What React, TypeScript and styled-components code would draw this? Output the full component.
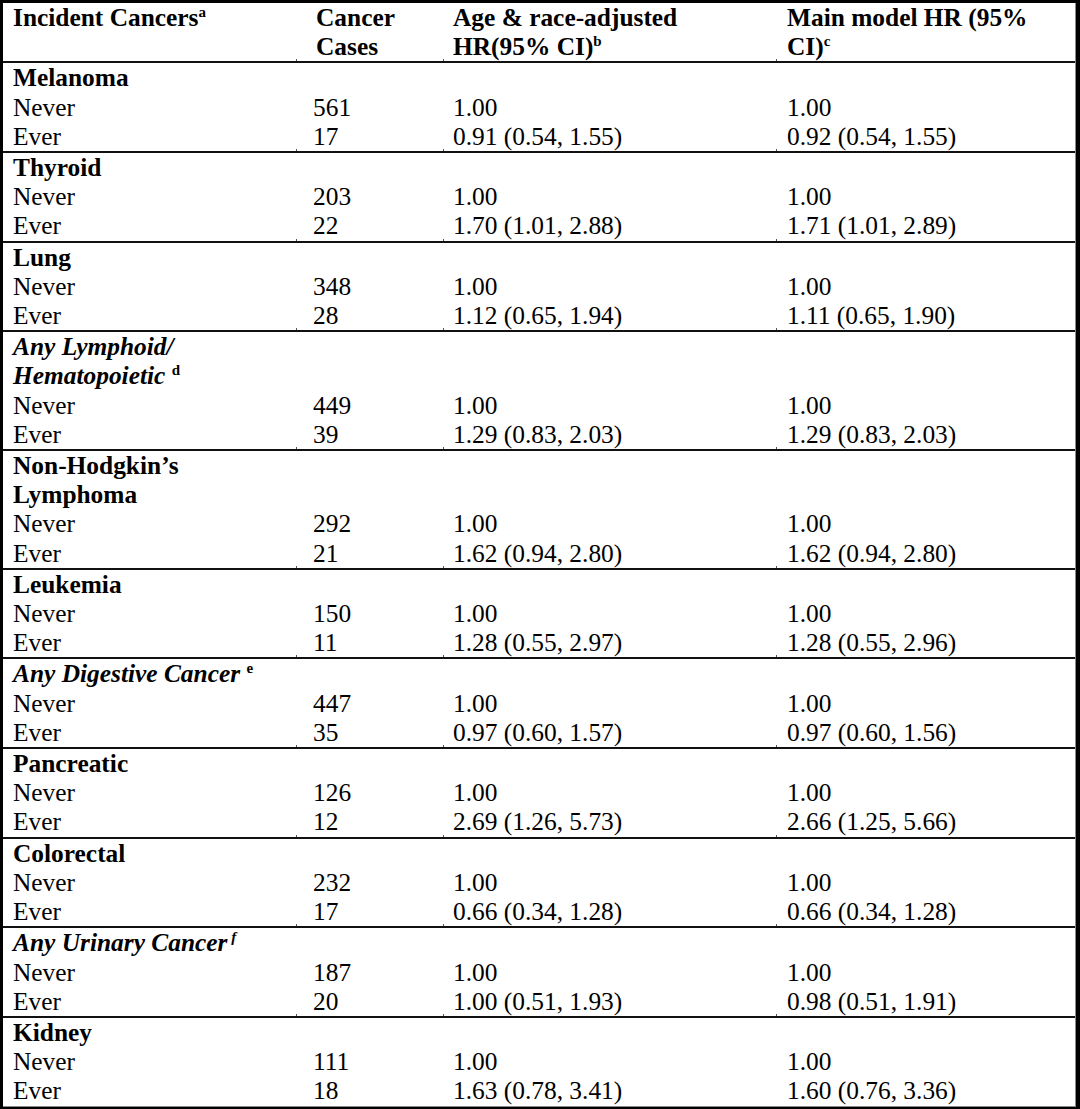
import React from 'react';
import styled, {createGlobalStyle} from 'styled-components';

const GlobalStyle = createGlobalStyle`
  html, body {
    margin: 0;
    padding: 0;
    background: #000;
  }
  body {
    font-family: 'Liberation Serif', 'Times New Roman', serif;
    color: #000;
  }
`;

const COLS = '293px 147px 333px 299px';

const Frame = styled.div`
  margin: 3px 0 0 3px;
  width: 1072px;
  background: #fff;
  border-right: 1px solid #8a8a8a;
  border-bottom: 1px solid #8a8a8a;
`;

const Group = styled.div<{$last?: boolean}>`
  position: relative;
  display: grid;
  grid-template-columns: ${COLS};
  font-size: 25.4px;
  line-height: 29.2px;
  border-bottom: ${(p) => (p.$last ? 'none' : '2px solid #111')};
`;

const HeadCell = styled.div<{$pad: number}>`
  font-weight: bold;
  padding-left: ${(p) => p.$pad}px;
  white-space: nowrap;
`;

const Cell = styled.div<{$pad: number}>`
  padding-left: ${(p) => p.$pad}px;
  white-space: nowrap;
`;

const Title = styled.div<{$italic?: boolean}>`
  grid-column: 1 / -1;
  padding-left: 10px;
  font-weight: bold;
  font-style: ${(p) => (p.$italic ? 'italic' : 'normal')};
  white-space: nowrap;
`;

const Sup = styled.sup<{$upright?: boolean}>`
  font-size: 15px;
  line-height: 0;
  vertical-align: 9px;
  font-style: ${(p) => (p.$upright ? 'normal' : 'inherit')};
`;

const Tick = styled.span<{$left: number}>`
  position: absolute;
  left: ${(p) => p.$left}px;
  bottom: 0;
  width: 1px;
  height: 2px;
  background: #555;
`;

const PADS = [10, 17, 10, 11];
const TICKS = [293, 440, 773];

type Row = [string, string, string];
interface CancerGroup {
  title: React.ReactNode;
  italic?: boolean;
  rows: [Row, Row];
}

const groups: CancerGroup[] = [
  {title: 'Melanoma', rows: [['561', '1.00', '1.00'], ['17', '0.91 (0.54, 1.55)', '0.92 (0.54, 1.55)']]},
  {title: 'Thyroid', rows: [['203', '1.00', '1.00'], ['22', '1.70 (1.01, 2.88)', '1.71 (1.01, 2.89)']]},
  {title: 'Lung', rows: [['348', '1.00', '1.00'], ['28', '1.12 (0.65, 1.94)', '1.11 (0.65, 1.90)']]},
  {
    title: (
      <>
        Any Lymphoid/
        <br />
        Hematopoietic <Sup $upright>d</Sup>
      </>
    ),
    italic: true,
    rows: [['449', '1.00', '1.00'], ['39', '1.29 (0.83, 2.03)', '1.29 (0.83, 2.03)']],
  },
  {
    title: (
      <>
        Non-Hodgkin’s
        <br />
        Lymphoma
      </>
    ),
    rows: [['292', '1.00', '1.00'], ['21', '1.62 (0.94, 2.80)', '1.62 (0.94, 2.80)']],
  },
  {title: 'Leukemia', rows: [['150', '1.00', '1.00'], ['11', '1.28 (0.55, 2.97)', '1.28 (0.55, 2.96)']]},
  {
    title: (
      <>
        Any Digestive Cancer <Sup $upright>e</Sup>
      </>
    ),
    italic: true,
    rows: [['447', '1.00', '1.00'], ['35', '0.97 (0.60, 1.57)', '0.97 (0.60, 1.56)']],
  },
  {title: 'Pancreatic', rows: [['126', '1.00', '1.00'], ['12', '2.69 (1.26, 5.73)', '2.66 (1.25, 5.66)']]},
  {title: 'Colorectal', rows: [['232', '1.00', '1.00'], ['17', '0.66 (0.34, 1.28)', '0.66 (0.34, 1.28)']]},
  {
    title: (
      <>
        Any Urinary Cancer<Sup> f</Sup>
      </>
    ),
    italic: true,
    rows: [['187', '1.00', '1.00'], ['20', '1.00 (0.51, 1.93)', '0.98 (0.51, 1.91)']],
  },
  {title: 'Kidney', rows: [['111', '1.00', '1.00'], ['18', '1.63 (0.78, 3.41)', '1.60 (0.76, 3.36)']]},
];

const Ticks = () => (
  <>
    {TICKS.map((left) => (
      <Tick key={left} $left={left} />
    ))}
  </>
);

export default function App() {
  return (
    <>
      <GlobalStyle />
      <Frame>
        <Group>
          <HeadCell $pad={PADS[0]}>
            Incident Cancers<Sup>a</Sup>
          </HeadCell>
          <HeadCell $pad={20}>
            Cancer
            <br />
            Cases
          </HeadCell>
          <HeadCell $pad={PADS[2]}>
            Age &amp; race-adjusted
            <br />
            HR(95% CI)<Sup>b</Sup>
          </HeadCell>
          <HeadCell $pad={PADS[3]}>
            Main model HR (95%
            <br />
            CI)<Sup>c</Sup>
          </HeadCell>
          <Ticks />
        </Group>
        {groups.map((g, gi) => {
          const last = gi === groups.length - 1;
          return (
            <Group key={gi} $last={last}>
              <Title $italic={g.italic}>{g.title}</Title>
              {g.rows.map((row, ri) => (
                <React.Fragment key={ri}>
                  <Cell $pad={PADS[0]}>{ri === 0 ? 'Never' : 'Ever'}</Cell>
                  {row.map((v, ci) => (
                    <Cell key={ci} $pad={PADS[ci + 1]}>
                      {v}
                    </Cell>
                  ))}
                </React.Fragment>
              ))}
              {!last && <Ticks />}
            </Group>
          );
        })}
      </Frame>
    </>
  );
}
